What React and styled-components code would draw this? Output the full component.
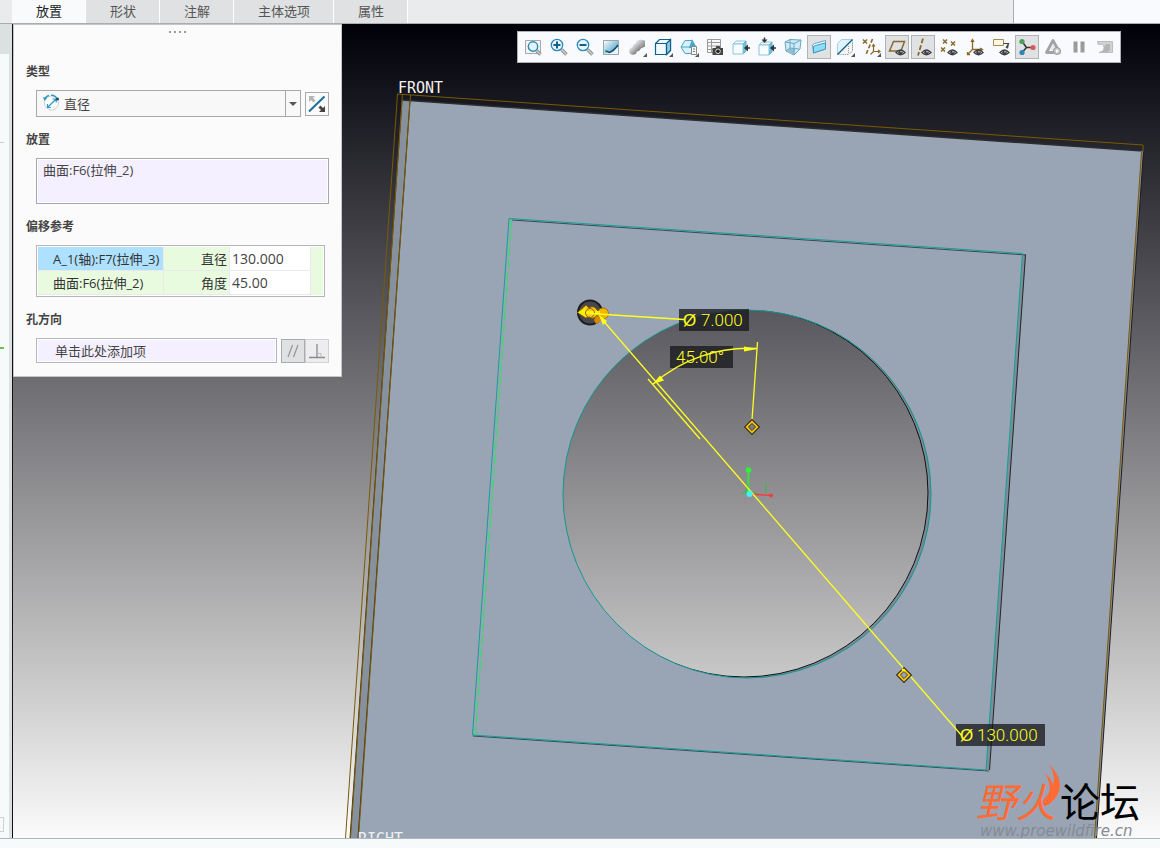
import React from 'react';
import styled, { createGlobalStyle } from 'styled-components';

const GlobalStyle = createGlobalStyle`
  * { box-sizing: border-box; }
  body {
    margin: 0;
    background: #f6f9fa;
    color: #444;
    font-family: 'Open Sans', 'Noto Sans CJK SC', sans-serif;
    font-size: 13px;
  }
  button, input, select, textarea { font: inherit; color: inherit; margin: 0; }
`;

const Page = styled.div`
  display: flex;
  flex-direction: column;
  min-height: 100vh;
`;

const TabBar = styled.nav`
  display: flex;
  height: 24px;
  padding-left: 12px;
  background: #e9ebec;
  border-bottom: 1px solid #a9adaf;
`;

const Tab = styled.button`
  padding: 0 23px 2px 24px;
  border: 0;
  border-right: 1px solid #fff;
  background: ${(p) => (p.$active ? '#f8fafc' : '#dfe1e2')};
  color: ${(p) => (p.$active ? '#222' : '#555')};
  line-height: 20px;
`;

const TabFiller = styled.div`
  width: 147px;
  margin-left: auto;
  border-left: 1px solid #a9adaf;
  background: #f8fafd;
`;

const Main = styled.main`
  display: flex;
  flex: 1;
`;

const Sidebar = styled.aside`
  display: flex;
  flex-direction: column;
  width: 12px;
  border-right: 3px solid #dbe1e1;
  background: #f7fafb;
  overflow: hidden;
`;

const SidebarHead = styled.div`
  height: 30px;
  background: #dbe1e1;
`;

const SidebarMark = styled.div`
  width: 4px;
  height: ${(p) => p.$height}px;
  margin-top: ${(p) => p.$gap};
  border: solid ${(p) => p.$color};
  border-width: ${(p) => p.$lines};
`;

const Viewport = styled.section`
  position: relative;
  flex: 1;
  min-width: 0;
  overflow: hidden;
  background: linear-gradient(#000008, #6c6b70 43%, #cfcfcf 83%, #fbfbfb);
`;

const Scene = styled.svg`
  position: absolute;
  inset: 0;
  width: 100%;
  height: 100%;
`;

const DimText = styled.text`
  font-family: Roboto, sans-serif;
  font-size: 17px;
  font-weight: 300;
  fill: #ffff1e;
`;

const DimSign = styled.tspan`
  font-family: 'Liberation Sans', sans-serif;
`;

const PlaneText = styled.text`
  font-family: 'DejaVu Sans Mono', monospace;
  font-size: 15px;
  fill: #f0f0f0;
`;

const Panel = styled.form`
  position: absolute;
  top: 0;
  left: 1px;
  width: 329px;
  padding: 0 12px 13px;
  border: 1px solid #c4c6c8;
  background: #fbfbfb;
`;

const Grip = styled.div`
  display: flex;
  justify-content: center;
  gap: 3px;
  height: 37px;
  padding-top: 6px;
`;

const GripDot = styled.span`
  width: 2px;
  height: 2px;
  background: #999;
`;

const Field = styled.div`
  margin-bottom: ${(p) => (p.$last ? 0 : 13)}px;
`;

const FieldLabel = styled.label`
  display: block;
  margin-bottom: 8px;
  font-size: 12px;
  font-weight: 600;
  line-height: 20px;
`;

const FieldRow = styled.div`
  display: flex;
  align-items: center;
  padding-left: 10px;
`;

const SelectWrap = styled.div`
  position: relative;
  flex: 1;
  margin-right: 4px;
`;

const Select = styled.select`
  appearance: none;
  display: block;
  width: 100%;
  height: 27px;
  padding: 0 20px 0 27px;
  border: 1px solid #a8a8a8;
  border-radius: 0;
  background: #f8f8f8;
`;

const SelectIcon = styled.svg`
  position: absolute;
  left: 6px;
  top: 3px;
  pointer-events: none;
`;

const SelectArrow = styled.span`
  position: absolute;
  top: 1px;
  right: 1px;
  bottom: 1px;
  display: flex;
  align-items: center;
  justify-content: center;
  width: 15px;
  border-left: 1px solid #a8a8a8;
  pointer-events: none;

  &::before {
    content: '';
    border: 4px solid transparent;
    border-top-color: #555;
    border-bottom: 0;
  }
`;

const SquareButton = styled.button`
  display: flex;
  align-items: center;
  justify-content: center;
  width: 24px;
  height: 24px;
  padding: 0;
  border: 1px solid ${(p) => (p.$tone === 'faint' ? '#cfd1d3' : '#a8abad')};
  background: ${(p) => ({ plain: '#fafafa', pressed: '#dfe1e3', faint: '#ededef' })[p.$tone]};
`;

const Collector = styled.textarea`
  display: block;
  width: 100%;
  height: 46px;
  padding: 1px 6px;
  border: 1px solid #a8a8a8;
  box-shadow: inset 0 0 0 1px #fff;
  background: #f4f0ff;
  line-height: 20px;
  resize: none;
`;

const DirectionInput = styled.input`
  flex: 1;
  min-width: 0;
  height: 25px;
  margin-right: 4px;
  padding: 0 18px;
  border: 1px solid #b4b6b8;
  box-shadow: inset 0 0 0 1px #fff;
  background: #f4f0ff;

  &::placeholder { color: #444; opacity: 1; }
`;

const RefTable = styled.table`
  flex: 1;
  height: 52px;
  margin-right: 4px;
  padding: 1px;
  border: 1px solid #b4b6b8;
  border-spacing: 0;
  table-layout: fixed;
  background: #fff;
`;

const RefName = styled.th`
  height: 24px;
  padding: 0 0 0 15px;
  border: solid #e8e9ee;
  border-width: 0 1px 1px 0;
  background: ${(p) => (p.$selected ? '#ade1ff' : '#e9fbdf')};
  color: #333;
  font-weight: 400;
  text-align: left;
  white-space: nowrap;
  overflow: hidden;
`;

const RefCell = styled.td`
  height: 24px;
  padding: 0 2px;
  border: solid #e8e9ee;
  border-width: 0 1px 1px 0;
  background: #e9fbdf;
  color: #333;
  text-align: right;
`;

const RefValue = styled(RefCell)`
  background: #fff;
  color: #444;
`;

const RefEnd = styled.td`
  padding: 0;
  background: #e9fbdf;
`;

const ValueInput = styled.input`
  display: block;
  width: 100%;
  height: 20px;
  padding: 0;
  border: 0;
  background: transparent;
  font-size: 14px;
`;

const Toolbar = styled.div`
  position: absolute;
  top: 7px;
  right: 39px;
  display: flex;
  align-items: center;
  gap: 2px;
  height: 32px;
  padding: 0 3px;
  border: 1px solid #aeb1b3;
  background: #f8fafd;
`;

const ToolButton = styled.button`
  display: flex;
  align-items: center;
  justify-content: center;
  width: 24px;
  height: 24px;
  padding: 0;
  border: 1px solid ${(p) => (p.$active ? '#b0b3b5' : 'transparent')};
  background: ${(p) => (p.$active ? '#dfe1e3' : 'transparent')};

  svg { flex: none; }
`;

const Watermark = styled.div`
  position: absolute;
  right: 20px;
  bottom: -2px;
  display: flex;
  flex-direction: column;
  align-items: flex-start;
`;

const WatermarkTitle = styled.div`
  display: flex;
  gap: 4px;
  font-family: 'Noto Sans CJK SC', sans-serif;
  font-weight: 400;
  font-size: 40px;
  line-height: 44px;
  color: #000;
`;

const WatermarkFire = styled.span`
  color: #ff6a35;
  font-style: italic;
`;

const WatermarkUrl = styled.div`
  padding-left: 4px;
  font: italic 15px/18px 'DejaVu Sans', sans-serif;
  color: #858a92;
`;

const Flame = styled.svg`
  position: absolute;
  left: 66px;
  top: -14px;
`;

const StatusBar = styled.footer`
  height: 10px;
  border-top: 1px solid #a9b8ba;
  background: #f6fafb;
`;

const DARK = '#14608a';
const BLUE = '#2a8ab8';
const PALE = '#d8f1fb';
const BROWN = '#8a6a2c';
const INK = '#3c3f42';

const Corner = () => <path d="M20 16v4h-4z" fill="#555" />;

const Handle = ({ d }) => (
  <>
    <path d={d} stroke="#8d8d8d" strokeWidth="3.4" />
    <path d={d} stroke="#cfcfcf" strokeWidth="1.4" />
  </>
);

const Eye = () => (
  <>
    <path d="M9 15.5Q13.5 10.500 18 15.500Q13.500 20 9 15.500z" fill="#fff" stroke={INK} strokeWidth="1.3" />
    <circle cx="13.500" cy="15.300" r="2.300" fill={INK} />
    <circle cx="14" cy="14.800" r="0.700" fill="#fff" />
  </>
);

const Cross = ({ x, y }) => (
  <path d={`M${x - 2} ${y - 2}l4 4m0-4l-4 4`} stroke={BROWN} strokeWidth="1.500" />
);

const LightCube = () => (
  <>
    <path d="M2 7l3-3h10l-3 3z" fill="#eefaff" stroke="#8cc4dc" />
    <path d="M12 7l3-3v10l-3 3z" fill="#6cc4e4" stroke="#5ab0d0" />
    <path d="M2 7h10v10H2z" fill="#f8fdff" stroke="#8cc4dc" />
  </>
);

const LeftArrow = () => (
  <>
    <path d="M19 11h-4" stroke="#333" strokeWidth="1.500" />
    <path d="M13 11l4-3.500v7z" fill="#333" />
  </>
);

const ICONS = [
  ['缩放区域', (
    <>
      <path d="M2.500 3.500h15v13h-15z" fill="#f4f4f4" stroke="#a8a8a8" />
      <Handle d="M13.500 13.500l4 4" />
      <circle cx="10" cy="9.500" r="4.700" fill="#dff4fc" stroke={BLUE} strokeWidth="1.4" />
    </>
  )],
  ['放大', (
    <>
      <Handle d="M12.500 12.500l5 5" />
      <circle cx="8" cy="8" r="5.700" fill="#e8f7fd" stroke={BLUE} strokeWidth="1.300" />
      <path d="M8 4.500v7M4.500 8h7" stroke={DARK} strokeWidth="2" />
    </>
  )],
  ['缩小', (
    <>
      <Handle d="M12.500 12.500l5 5" />
      <circle cx="8" cy="8" r="5.700" fill="#e8f7fd" stroke={BLUE} strokeWidth="1.300" />
      <path d="M4.500 8h7" stroke={DARK} strokeWidth="2" />
    </>
  )],
  ['重画', (
    <>
      <path d="M2.500 3.500h15v14h-15z" fill="url(#repaint)" stroke="#9aa3a8" />
      <path d="M3 16.500Q10 17 17 9v8H3z" fill="#e8f6fc" />
      <path d="M4.500 14q2 0 3.500 1.500Q13 14 17 8" stroke="#134c6c" strokeWidth="1.500" />
    </>
  )],
  ['渲染选项', (
    <>
      <path d="M9 4.500l4-2 5 1v6l-5 2.500-4-2z" fill="url(#metal)" />
      <circle cx="9.500" cy="10.500" r="4" fill="url(#metal)" />
      <circle cx="6" cy="14" r="3.800" fill="url(#metal)" />
      <Corner />
    </>
  )],
  ['显示样式', (
    <>
      <path d="M2.500 6.500l4-4h11v11l-4 4h-11z" fill="#eefaff" stroke={DARK} strokeWidth="1.200" />
      <path d="M13.500 6.500l4-4v11l-4 4z" fill="#8fd0e8" stroke={DARK} strokeWidth="1.200" />
      <path d="M2.500 6.500h11v11" stroke={DARK} strokeWidth="1.200" />
      <Corner />
    </>
  )],
  ['已保存方向', (
    <>
      <path d="M2 10l4-6.500h7l4 6.500-4 6.500H6z" fill={PALE} stroke="#4ba4c8" />
      <path d="M13 2l4.500 9H10z" fill="#4aa5ca" />
      <path d="M2 10h11" stroke="#4ba4c8" />
      <path d="M12.500 9.500h5v8h-5z" fill="#f8f8f8" stroke="#888" />
      <path d="M14 12h2M14 14.500h2" stroke="#777" />
      <Corner />
    </>
  )],
  ['视图管理器', (
    <>
      <path d="M2.500 2.500h13v13h-13zM2.500 5.500h13M2.500 9h13M2.500 12.500h13M6.500 2.500v13" fill="#f8f8f8" stroke="#999" />
      <path d="M7.500 11h3l1-2h3l1 2H18v7H7.500z" fill="#444" />
      <circle cx="13" cy="14.300" r="2.300" fill="#222" stroke="#ddd" />
    </>
  )],
  ['标准方向', <><LightCube /><LeftArrow /></>],
  ['视图法向', (
    <>
      <g transform="translate(0 1)"><LightCube /></g>
      <LeftArrow />
      <path d="M7.500 0.500v3" stroke="#333" strokeWidth="1.500" />
      <path d="M7.500 6L4.500 2.500h6z" fill="#333" />
    </>
  )],
  ['透视图', (
    <>
      <path d="M2 5l5-2.500 11 .5-1 9-6 6-8-4z" fill="#cdeaf5" stroke="#6aa8c2" />
      <path d="M3 14l4-3 5 1-1 6z" fill="#94bfd0" />
      <path d="M2 5l9 1.500L18 3M11 6.500V18M7 2.500V11l-4 3M7 11l9 1" stroke="#6aa8c2" />
    </>
  )],
  ['截面', (
    <>
      <path d="M3.500 8q2-2 4-2l9-2.500v8.500l-12 4z" fill="#effaff" stroke="#65a8c6" />
      <path d="M4.500 9.500Q7 8 16.500 6v6l-12 4z" fill="#8fdcf5" stroke="#3b9ac2" />
    </>
  ), true],
  ['修剪', (
    <>
      <path d="M2.500 6.500l4-4h11v11l-4 4h-11z" fill="#dff3fa" stroke="#a9cfdd" />
      <path d="M5 17L17 5v9l-4 4z" fill="#f4f4f6" />
      <path d="M8 17.500h6l3.500-3.500V6M13.500 9v8" stroke="#999" strokeDasharray="1 1" />
      <path d="M2.500 17.500l15-15" stroke="#155b80" strokeWidth="1.300" />
      <Corner />
    </>
  )],
  ['基准显示过滤器', (
    <>
      <Cross x={4} y={4.5} />
      <path d="M11.500 2L5 17.500" stroke={BROWN} strokeWidth="1.700" strokeDasharray="4 2" />
      <path d="M12.500 8v6.500h6M12.500 14.500l-3 3M11 9.500l1.500-2 1.500 2M17 13l2 1.500-2 1.500" stroke={BROWN} strokeWidth="1.200" />
      <Corner />
    </>
  )],
  ['平面显示', <><path d="M6.500 4.500h11l-3.500 9.500H2.500z" stroke={BROWN} strokeWidth="1.500" /><Eye /></>, true],
  ['轴显示', <><path d="M10 1.500L5 18.500" stroke={BROWN} strokeWidth="1.800" strokeDasharray="5 2" /><Eye /></>, true],
  ['点显示', <><Cross x={6} y={4.5} /><Cross x={14} y={6.5} /><Cross x={4} y={12.5} /><Eye /></>],
  ['坐标系显示', (
    <>
      <path d="M7.500 3v9.500h9M7.500 12.500l-5 5M6 5l1.500-2.500L9 5M15 11l2.500 1.500L15 14M2.500 15v2.500H5" stroke={BROWN} strokeWidth="1.300" />
      <Eye />
    </>
  )],
  ['注释显示', (
    <>
      <path d="M2.500 2.500h10v6h-10z" fill="#fff7e2" stroke="#a08a58" />
      <path d="M12.500 6.500h5l-2.500 4.500m2.500-4.500l-1 5" stroke="#444" strokeWidth="1.200" />
      <Eye />
    </>
  )],
  ['旋转中心', (
    <>
      <path d="M5 4.500l4.500 6h6M9.500 10.500l-4.500 5" stroke="#333" strokeWidth="1.500" />
      <circle cx="5" cy="4.500" r="2.600" fill="#46a05c" />
      <circle cx="16" cy="10.500" r="2.600" fill="#d85a5a" />
      <circle cx="5" cy="15.500" r="2.600" fill="#2f86b8" />
    </>
  ), true],
  ['仿真', (
    <>
      <path d="M10 3.500l6.500 12h-13z" stroke="#a2a2a2" strokeWidth="2.800" strokeLinejoin="round" />
      <path d="M10 7l2.500 6h-5z" fill="#e8e8e8" />
      <circle cx="14" cy="14" r="3.500" fill="#c8c8c8" stroke="#999" />
      <path d="M13 12l3 2-3 2z" fill="#fff" />
    </>
  )],
  ['暂停', <path d="M4.500 4.500h4v11h-4zM11.500 4.500h4v11h-4z" fill="#9a9a9a" />],
  ['继续', (
    <>
      <path d="M2.500 4.500h15v11H4q5-1 5-5t-6-3z" fill="#d2d2d2" stroke="#bcbcbc" />
      <path d="M4 15.500q6-1 5-5.500l2-3h4v6l-3 2.500z" fill="#b4b4b4" />
    </>
  )],
];

const Diamond = ({ x, y }) => (
  <g transform={`translate(${x} ${y}) rotate(45)`}>
    <path d="M-5 -5h10v10h-10z" stroke="#3a3420" strokeWidth="1.600" />
    <path d="M-3.700 -3.700h7.400v7.400h-7.400z" stroke="#ffc400" strokeWidth="1.800" />
    <path d="M-2.500 -2.500h5v5h-5z" stroke="#3a3420" strokeWidth="0.800" />
  </g>
);

const ModelScene = () => (
  <Scene viewBox="12 24 1148 814" preserveAspectRatio="xMinYMin slice" fill="none">
    <defs>
      <clipPath id="bore"><circle cx="747" cy="494" r="184" /></clipPath>
    </defs>

    <path d="M12.500 24v814" stroke="#111" />
    <path
      fillRule="evenodd"
      fill="#99a5b5"
      d="M402 100L1143 151 1096 838H350zM563 494a184 184 0 1 0 368 0a184 184 0 1 0-368 0z"
    />
    <path d="M402 100l8 1L358 838h-8z" fill="#87919e" />
    <path
      clipPath="url(#bore)"
      fillRule="evenodd"
      fill="#7b8995"
      d="M540 290h400v400H540zM560 493a184 184 0 1 0 368 0a184 184 0 1 0-368 0z"
    />
    <circle clipPath="url(#bore)" cx="744" cy="493" r="184" stroke="#111" />
    <circle cx="747" cy="494" r="184" stroke="#12978f" />

    <path d="M402 100L1143 151" stroke="#2c2d32" strokeWidth="1.500" />
    <path d="M1142.500 151L1095.500 838" stroke="#8a8b8f" strokeWidth="2" />
    <path d="M1143.500 151L1096.500 838" stroke="#1c1c20" />

    <g stroke="#3c3218">
      <path d="M402 100L350 838M410 100L358 838" />
    </g>
    <g stroke="#7a5a05">
      <path d="M397 94L1143 145v7" />
      <path d="M397.500 94L345.500 838M402.500 94l-52 744M410.500 95l-52 743" />
      <path d="M1141.500 152L1094.500 838" />
    </g>

    <path d="M1022.500 254.500h3.500L989.500 770h-3.500z" fill="#808c98" />
    <path d="M512 220l514 35M473 736l516 35" stroke="#3b4a52" />
    <path d="M1025.500 254.500L989.500 770" stroke="#22262a" />
    <path d="M509 218.500L1022.500 253.500 986 770 472.500 735z" stroke="#10a098" />
    <path d="M511.500 220L475.500 735" stroke="#28e55c" strokeDasharray="10 3" />

    <PlaneText x="398" y="93">FRONT</PlaneText>
    <PlaneText x="358" y="844">RIGHT</PlaneText>

    <circle cx="590" cy="312.500" r="12" fill="#48484c" stroke="#1c1c20" strokeWidth="2" />
    <path d="M596 324a12 12 0 0 0 8-10l-6-2-4 8z" fill="#d98a00" />
    <circle cx="603" cy="313.500" r="5.500" fill="#f2b500" stroke="#a87400" />
    <path d="M577.500 312.500L586 305l3 3a5.500 5.500 0 1 1 0 9l-3 1z" fill="#ffc81e" stroke="#7c5c00" />
    <path d="M578 312.500l8-5v10zM584 311h16v3h-16z" fill="#fff000" />
    <circle cx="590" cy="313" r="4.500" stroke="#8a6a00" />

    <g fill="#16181c" fillOpacity="0.760">
      <path d="M679 309h70v22h-70zM670 346h63v22h-63zM956 724h89v22h-89z" />
    </g>

    <path d="M748 493l.5-23" stroke="#2ee83c" strokeWidth="2" />
    <path d="M742 493h16M766 482v11M745 493l3-9" stroke="#37b850" />
    <circle cx="748.500" cy="470" r="2.800" fill="#2ff03c" />
    <path d="M750 494l21 1.500" stroke="#f53c3c" strokeWidth="1.300" />
    <circle cx="771" cy="495.500" r="2" fill="#f53c3c" />

    <g stroke="#ffff1e" strokeWidth="1.300">
      <path d="M590 313.500L684 319.500M600 317L962 736" />
      <path d="M648 379l52 60M757.500 342L752 420" />
      <path d="M653 384A145 145 0 0 1 757 348.500" />
    </g>
    <path d="M653 384l11-3.500-4-5zM757 349l-13-2.500v5zM599 315l8 6-4 4z" fill="#ffff1e" />
    <circle cx="749.500" cy="494" r="3" fill="#3ff0ff" />

    <Diamond x={752} y={427} />
    <Diamond x={904} y={675} />
    <path d="M902 669l3 2" stroke="#ffff1e" strokeWidth="2" />

    <DimText x="683" y="326"><DimSign>Ø</DimSign><tspan x="701">7.000</tspan></DimText>
    <DimText x="676" y="363">45.00°</DimText>
    <DimText x="960" y="741"><DimSign>Ø</DimSign><tspan x="977">130.000</tspan></DimText>
  </Scene>
);

const TABS = ['放置', '形状', '注解', '主体选项', '属性'];

const REFERENCES = [
  { name: 'A_1(轴):F7(拉伸_3)', kind: '直径', value: '130.000', selected: true },
  { name: '曲面:F6(拉伸_2)', kind: '角度', value: '45.00' },
];

const PlacementPanel = () => (
  <Panel>
    <Grip>
      <GripDot /><GripDot /><GripDot /><GripDot />
    </Grip>

    <Field>
      <FieldLabel htmlFor="type">类型</FieldLabel>
      <FieldRow>
        <SelectWrap>
          <Select id="type" defaultValue="diameter">
            <option value="diameter">直径</option>
          </Select>
          <SelectIcon width="20" height="20" viewBox="0 0 20 20" fill="none">
            <circle cx="9.500" cy="10" r="7" fill="#fff" stroke="#d0d0d0" />
            <path d="M2.500 6.500Q4 3 7 2.500M9 2.300Q13 2 15 6" stroke="#2a9ac6" strokeWidth="1.500" />
            <path d="M6 14l8-8M5.500 11v3.500H9M10.500 6h3.700v3.500" stroke="#2a9ac6" strokeWidth="1.200" />
            <path d="M1 4l1.500 4L5 5z" fill="#2a9ac6" />
            <circle cx="15.500" cy="6" r="1.500" fill="#14506c" />
          </SelectIcon>
          <SelectArrow />
        </SelectWrap>
        <SquareButton type="button" $tone="plain" aria-label="切换">
          <svg width="20" height="20" viewBox="0 0 20 20" fill="none">
            <path d="M2 17.500L17.500 2.500" stroke="#1b6f99" strokeWidth="2" />
            <path d="M2 8V2h6L6 4l2.500 2.500-2 2L4 6z" fill="#b4b4b4" />
            <path d="M18 12v6h-6l2-2-2.500-2.500 2-2L16 14z" fill="#444" />
          </svg>
        </SquareButton>
      </FieldRow>
    </Field>

    <Field>
      <FieldLabel htmlFor="placement">放置</FieldLabel>
      <FieldRow>
        <Collector id="placement" defaultValue="曲面:F6(拉伸_2)" />
      </FieldRow>
    </Field>

    <Field>
      <FieldLabel as="div" id="offset-label">偏移参考</FieldLabel>
      <FieldRow>
        <RefTable aria-labelledby="offset-label">
          <colgroup>
            <col width="126" />
            <col width="66" />
            <col width="81" />
            <col />
          </colgroup>
          <tbody>
            {REFERENCES.map((r) => (
              <tr key={r.name}>
                <RefName scope="row" $selected={r.selected}>{r.name}</RefName>
                <RefCell>{r.kind}</RefCell>
                <RefValue><ValueInput aria-label={r.kind} defaultValue={r.value} /></RefValue>
                <RefEnd />
              </tr>
            ))}
          </tbody>
        </RefTable>
      </FieldRow>
    </Field>

    <Field $last>
      <FieldLabel htmlFor="direction">孔方向</FieldLabel>
      <FieldRow>
        <DirectionInput id="direction" placeholder="单击此处添加项" />
        <SquareButton type="button" $tone="pressed" aria-label="平行">
          <svg width="20" height="20" viewBox="0 0 20 20" fill="none" stroke="#999" strokeWidth="1.300">
            <path d="M5 16L9.500 4M10.500 16L15 4" />
          </svg>
        </SquareButton>
        <SquareButton type="button" $tone="faint" aria-label="垂直">
          <svg width="20" height="20" viewBox="0 0 20 20" fill="none" stroke="#8a8a8a" strokeWidth="1.300">
            <path d="M2 16.500h16M10 16.500V3" />
            <path d="M10 12.500h4v4" stroke="#bbb" strokeWidth="1" />
          </svg>
        </SquareButton>
      </FieldRow>
    </Field>
  </Panel>
);

export default function App() {
  return (
    <Page>
      <GlobalStyle />
      <TabBar>
        {TABS.map((name, i) => (
          <Tab key={name} type="button" $active={i === 0}>{name}</Tab>
        ))}
        <TabFiller />
      </TabBar>
      <Main>
        <Sidebar>
          <SidebarHead />
          <SidebarMark $height={17} $gap="72px" $color="#c9c9c9" $lines="0 0 1px" />
          <SidebarMark $height={2} $gap="204px" $color="#66c24a" $lines="0 0 2px" />
          <SidebarMark $height={15} $gap="auto" $color="#cfd2d3" $lines="1px 1px 1px 0" />
          <SidebarMark $height={6} $gap="0" $color="transparent" $lines="0" />
        </Sidebar>
        <Viewport>
          <ModelScene />
          <Toolbar role="toolbar">
            {ICONS.map(([label, drawing, active]) => (
              <ToolButton key={label} type="button" aria-label={label} $active={active}>
                <svg width="20" height="20" viewBox="0 0 20 20" fill="none">
                  <defs>
                    <linearGradient id="repaint" x2="1" y2="1">
                      <stop stopColor="#fff" />
                      <stop offset="1" stopColor="#2b93bf" />
                    </linearGradient>
                    <linearGradient id="metal" x2="1" y2="1">
                      <stop stopColor="#f4f4f4" />
                      <stop offset="1" stopColor="#6c6c6c" />
                    </linearGradient>
                  </defs>
                  {drawing}
                </svg>
              </ToolButton>
            ))}
          </Toolbar>
          <PlacementPanel />
          <Watermark>
            <WatermarkTitle>
              <WatermarkFire>野火</WatermarkFire>
              <span>论坛</span>
            </WatermarkTitle>
            <Flame width="20" height="46" viewBox="0 0 20 46">
              <path d="M7 0Q21 14 17 27 13 38 3 42 -1 40 2 35 10 28 7 19 6 13 2 9 9 13 11 21 14 12 7 0z" fill="#ff6a35" />
            </Flame>
            <WatermarkUrl>www.proewildfire.cn</WatermarkUrl>
          </Watermark>
        </Viewport>
      </Main>
      <StatusBar />
    </Page>
  );
}
